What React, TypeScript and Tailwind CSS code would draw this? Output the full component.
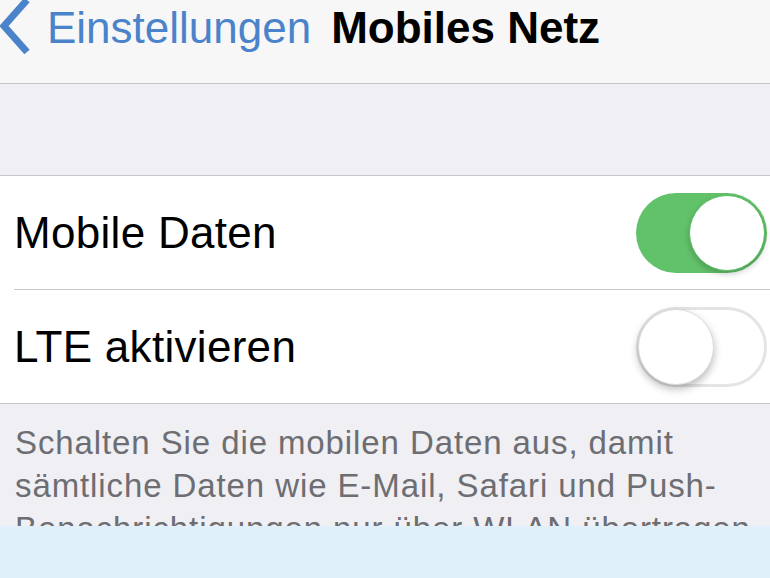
import React from "react";

const Toggle = ({ on }: { on: boolean }) => {
  if (on) {
    return (
      <div className="flex h-[80px] w-[131px] items-center justify-end rounded-full bg-[#62c26a] p-[2px]">
        <div className="h-[76px] w-[76px] rounded-full border border-[#5bbd63] bg-white shadow-[0_3px_6px_rgba(0,0,0,0.22)]" />
      </div>
    );
  }
  return (
    <div className="flex h-[80px] w-[131px] items-center justify-start rounded-full border-[3px] border-[#e4e4e6] bg-white">
      <div className="ml-[-1px] h-[76px] w-[76px] rounded-full border border-[#dcdcdc] bg-white shadow-[0_4px_8px_rgba(0,0,0,0.28)]" />
    </div>
  );
};

export default function App() {
  return (
    <div className="flex h-[578px] w-[770px] flex-col overflow-hidden bg-[#efeff4] font-['Liberation_Sans',Arial,sans-serif]">
      {/* nav bar */}
      <div className="flex h-[84px] shrink-0 items-start border-b border-[#c8c7cc] bg-[#f7f7f8]">
        <svg width="38" height="60" viewBox="0 0 38 60" className="ml-[-2px] mt-[-4px] shrink-0">
          <path d="M29 4 L6 30 L29 56" fill="none" stroke="#4a83c9" strokeWidth="7" strokeLinecap="butt" strokeLinejoin="miter" />
        </svg>
        <div className="ml-[11px] flex items-baseline gap-[20px] pt-[6px] text-[44px] leading-none">
          <span className="text-[#4a83c9]">Einstellungen</span>
          <span className="font-bold text-black">Mobiles Netz</span>
        </div>
      </div>

      {/* spacer */}
      <div className="h-[91px] shrink-0" />

      {/* settings group */}
      <div className="shrink-0 border-y border-[#c8c7cc] bg-white pl-[14px] text-[44px] leading-none tracking-[0.3px] text-black">
        <div className="flex h-[114px] items-center justify-between border-b border-[#c8c7cc] pr-[3px]">
          <span>Mobile Daten</span>
          <Toggle on />
        </div>
        <div className="flex h-[113px] items-center justify-between pr-[3px]">
          <span>LTE aktivieren</span>
          <Toggle on={false} />
        </div>
      </div>

      {/* footer note */}
      <div className="h-[122px] shrink-0 overflow-hidden pl-[15px] pt-[17px] text-[33px] leading-[43px] tracking-[0.9px] text-[#6d6d72]">
        Schalten Sie die mobilen Daten aus, damit
        <br />
        sämtliche Daten wie E-Mail, Safari und Push-
        <br />
        Benachrichtigungen nur über WLAN übertragen
      </div>

      {/* bottom banner */}
      <div className="flex-1 bg-[#dff0fb]" />
    </div>
  );
}
